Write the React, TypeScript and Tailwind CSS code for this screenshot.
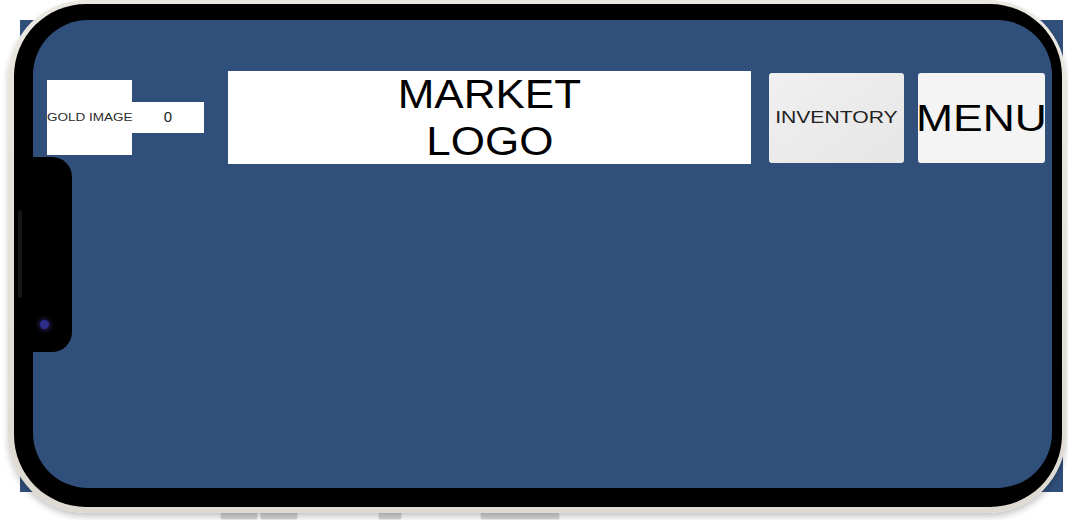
import React from 'react';

const font = { fontFamily: '"Liberation Sans", Arial, sans-serif' };

const GoldCounter = () => (
  <div className="mt-[60px] flex items-center">
    <div className="w-[85px] h-[75px] bg-white flex items-center justify-center">
      <span className="text-[10px] leading-none text-[#2a2a2a] whitespace-nowrap scale-x-[1.35]">GOLD IMAGE</span>
    </div>
    <div className="w-[72px] h-[31px] bg-white flex items-center justify-center text-[15px] text-[#222]">0</div>
  </div>
);

const MarketLogo = () => (
  <div className="ml-[24px] mt-[51px] w-[523px] h-[93px] bg-white flex flex-col items-center justify-center text-[40px] leading-[47px] text-black">
    <span className="scale-x-[1.1]">MARKET</span>
    <span className="scale-x-[1.1]">LOGO</span>
  </div>
);

export default function App() {
  return (
    <div className="relative w-[1068px] h-[520px] bg-white overflow-hidden" style={font}>
      {/* game view behind the device frame */}
      <div className="absolute left-[20px] top-[20px] w-[1043px] h-[472px] bg-[#314f7b]" />

      {/* side buttons seen under the phone */}
      <div className="absolute left-[220px] top-[511px] w-[38px] h-[9px] rounded-[2px] bg-[#d6d6d6] border border-[#f0f0f0]" />
      <div className="absolute left-[260px] top-[511px] w-[38px] h-[9px] rounded-[2px] bg-[#d6d6d6] border border-[#f0f0f0]" />
      <div className="absolute left-[378px] top-[511px] w-[24px] h-[9px] rounded-[2px] bg-[#d6d6d6] border border-[#f0f0f0]" />
      <div className="absolute left-[480px] top-[511px] w-[80px] h-[9px] rounded-[2px] bg-[#d6d6d6] border border-[#f0f0f0]" />

      {/* device frame */}
      <div className="absolute left-[8px] top-0 w-[1058px] h-[513px] rounded-[78px] bg-gradient-to-b from-[#ebe8e1] to-[#dedad2] pt-[4px] pl-[6px] pr-[4px] pb-[6px] shadow-[0_4px_6px_rgba(0,0,0,0.22)]">
        <div className="h-full rounded-[72px] bg-black pt-[16px] pl-[19px] pr-[10px] pb-[19px]">
          <div className="relative h-full rounded-[55px] bg-[#314f7b] overflow-hidden">
            <div className="flex items-start pl-[14px]">
              <GoldCounter />
              <MarketLogo />
              <button className="ml-[18px] mt-[53px] w-[135px] h-[90px] rounded-[3px] bg-gradient-to-br from-[#f0f0f0] to-[#e6e6e6] flex items-center justify-center">
                <span className="text-[16px] leading-none text-[#222] whitespace-nowrap scale-x-[1.32]">INVENTORY</span>
              </button>
              <button className="ml-[14px] mt-[53px] w-[127px] h-[90px] rounded-[3px] bg-[#f4f4f4] flex items-center justify-center">
                <span className="text-[37px] leading-none text-black whitespace-nowrap scale-x-[1.2]">MENU</span>
              </button>
            </div>
          </div>
        </div>

        {/* camera notch */}
        <div className="absolute left-[6px] top-[157px] w-[58px] h-[195px] rounded-r-[20px] bg-black">
          <div className="absolute left-[4px] top-[53px] w-[4px] h-[88px] rounded-full bg-[#161616]" />
          <div className="absolute left-[26px] top-[163px] w-[9px] h-[9px] rounded-full bg-[#2b2f8a] shadow-[0_0_4px_2px_rgba(60,40,120,0.6)]" />
        </div>
      </div>
    </div>
  );
}
